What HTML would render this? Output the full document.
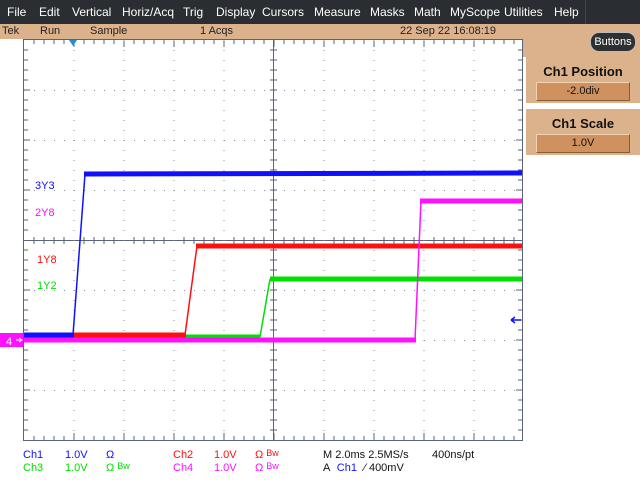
<!DOCTYPE html>
<html><head><style>
body{margin:0;width:640px;height:480px;background:#fff;position:relative;overflow:hidden;font-family:"Liberation Sans",sans-serif;}
#menu{position:absolute;left:0;top:0;width:640px;height:24px;background:#2a2d31;color:#fff;font-size:12px;}
#menu span{position:absolute;top:5px;}
#status{position:absolute;left:0;top:24px;width:640px;height:15px;background:#dcb28c;font-size:11px;color:#222;}
#status span{position:absolute;top:1px;}
#side{position:absolute;left:523px;top:39px;width:117px;height:18px;background:#dcb28c;}
.box{position:absolute;left:526px;width:114px;height:46px;background:#dcb28c;text-align:center;}
.box b{display:block;font-size:13px;margin-top:7px;color:#111;}
.val{position:absolute;left:10px;top:25px;width:92px;height:17px;background:#cf925e;border-top:1px solid #f0d2b4;border-left:1px solid #f0d2b4;border-bottom:1px solid #8a5c34;border-right:1px solid #8a5c34;font-size:11px;line-height:17px;color:#111;}
#btn{position:absolute;left:590px;top:32px;width:44px;height:18px;background:#2e3132;color:#fff;border-radius:9px;border:1px solid #bbb;font-size:11px;line-height:18px;text-align:center;}
.bt{position:absolute;font-size:11px;}
.lab{position:absolute;font-size:11px;}
</style></head><body>
<div id="menu">
<span style="left:7px">File</span><span style="left:39px">Edit</span><span style="left:72px">Vertical</span><span style="left:122px">Horiz/Acq</span><span style="left:183px">Trig</span><span style="left:216px">Display</span><span style="left:262px">Cursors</span><span style="left:314px">Measure</span><span style="left:370px">Masks</span><span style="left:414px">Math</span><span style="left:450px">MyScope</span><span style="left:504px">Utilities</span><span style="left:554px">Help</span>
<div style="position:absolute;left:585px;top:0;width:1px;height:24px;background:#444"></div>
</div>
<div id="status"><span style="left:2px">Tek</span><span style="left:40px">Run</span><span style="left:90px">Sample</span><span style="left:200px">1 Acqs</span><span style="left:400px">22 Sep 22 16:08:19</span></div>
<div id="side"></div>
<div id="btn">Buttons</div>
<div class="box" style="top:57px"><b>Ch1 Position</b><div class="val">-2.0div</div></div>
<div class="box" style="top:109px"><b>Ch1 Scale</b><div class="val">1.0V</div></div>
<svg style="position:absolute;left:0;top:0" width="640" height="480">
<g id="grid" stroke="#5a6478" fill="none" stroke-width="1">
<rect x="23.5" y="39.5" width="499" height="401"/>
<line x1="273.5" y1="40" x2="273.5" y2="440"/>
<line x1="24" y1="240.5" x2="522" y2="240.5"/>
</g>
<g stroke="#5a6478" stroke-width="1">
<path d="M34 40v4M44 40v4M54 40v4M64 40v4M74 40v7M84 40v4M94 40v4M104 40v4M114 40v4M124 40v7M134 40v4M144 40v4M154 40v4M164 40v4M174 40v7M184 40v4M194 40v4M204 40v4M214 40v4M224 40v7M234 40v4M244 40v4M254 40v4M264 40v4M274 40v7M284 40v4M294 40v4M304 40v4M314 40v4M324 40v7M334 40v4M344 40v4M354 40v4M364 40v4M374 40v7M384 40v4M394 40v4M404 40v4M414 40v4M424 40v7M434 40v4M444 40v4M454 40v4M464 40v4M474 40v7M484 40v4M494 40v4M504 40v4M514 40v4"/>
<path d="M34 440v-4M44 440v-4M54 440v-4M64 440v-4M74 440v-7M84 440v-4M94 440v-4M104 440v-4M114 440v-4M124 440v-7M134 440v-4M144 440v-4M154 440v-4M164 440v-4M174 440v-7M184 440v-4M194 440v-4M204 440v-4M214 440v-4M224 440v-7M234 440v-4M244 440v-4M254 440v-4M264 440v-4M274 440v-7M284 440v-4M294 440v-4M304 440v-4M314 440v-4M324 440v-7M334 440v-4M344 440v-4M354 440v-4M364 440v-4M374 440v-7M384 440v-4M394 440v-4M404 440v-4M414 440v-4M424 440v-7M434 440v-4M444 440v-4M454 440v-4M464 440v-4M474 440v-7M484 440v-4M494 440v-4M504 440v-4M514 440v-4"/>
<path d="M34 237v7M44 237v7M54 237v7M64 237v7M84 237v7M94 237v7M104 237v7M114 237v7M134 237v7M144 237v7M154 237v7M164 237v7M184 237v7M194 237v7M204 237v7M214 237v7M234 237v7M244 237v7M254 237v7M264 237v7M284 237v7M294 237v7M304 237v7M314 237v7M334 237v7M344 237v7M354 237v7M364 237v7M384 237v7M394 237v7M404 237v7M414 237v7M434 237v7M444 237v7M454 237v7M464 237v7M484 237v7M494 237v7M504 237v7M514 237v7"/>
<path d="M24 50h4M24 60h4M24 70h4M24 80h4M24 90h6M24 100h4M24 110h4M24 120h4M24 130h4M24 140h6M24 150h4M24 160h4M24 170h4M24 180h4M24 190h6M24 200h4M24 210h4M24 220h4M24 230h4M24 250h4M24 260h4M24 270h4M24 280h4M24 290h6M24 300h4M24 310h4M24 320h4M24 330h4M24 340h6M24 350h4M24 360h4M24 370h4M24 380h4M24 390h6M24 400h4M24 410h4M24 420h4M24 430h4"/>
<path d="M522 50h-4M522 60h-4M522 70h-4M522 80h-4M522 90h-6M522 100h-4M522 110h-4M522 120h-4M522 130h-4M522 140h-6M522 150h-4M522 160h-4M522 170h-4M522 180h-4M522 190h-6M522 200h-4M522 210h-4M522 220h-4M522 230h-4M522 250h-4M522 260h-4M522 270h-4M522 280h-4M522 290h-6M522 300h-4M522 310h-4M522 320h-4M522 330h-4M522 340h-6M522 350h-4M522 360h-4M522 370h-4M522 380h-4M522 390h-6M522 400h-4M522 410h-4M522 420h-4M522 430h-4"/>
<path d="M270 50h7M270 60h7M270 70h7M270 80h7M270 90h7M270 100h7M270 110h7M270 120h7M270 130h7M270 140h7M270 150h7M270 160h7M270 170h7M270 180h7M270 190h7M270 200h7M270 210h7M270 220h7M270 230h7M270 250h7M270 260h7M270 270h7M270 280h7M270 290h7M270 300h7M270 310h7M270 320h7M270 330h7M270 340h7M270 350h7M270 360h7M270 370h7M270 380h7M270 390h7M270 400h7M270 410h7M270 420h7M270 430h7"/>
</g>
<g stroke="#8890a0" stroke-width="1" stroke-dasharray="1 9">
<path d="M74 40v400M124 40v400M174 40v400M224 40v400M324 40v400M374 40v400M424 40v400M474 40v400"/>
<path d="M24 90.5h498M24 140.5h498M24 190.5h498M24 290.5h498M24 340.5h498M24 390.5h498"/>
</g>
<polygon points="69,40 77,40 73,46" fill="#1e90d8"/>
<g fill="none" stroke-width="5">
<line stroke="#00e000" x1="185" y1="337" x2="260" y2="337"/>
<line stroke="#00e000" x1="270" y1="279" x2="522" y2="279"/>
<line stroke="#1010ff" x1="24" y1="335" x2="74" y2="335"/>
<line stroke="#1010ff" x1="84" y1="174" x2="522" y2="173"/>
<line stroke="#ff1010" x1="74" y1="335" x2="186" y2="335"/>
<line stroke="#ff1010" x1="196" y1="246" x2="522" y2="246"/>
<line stroke="#ff10ff" x1="24" y1="340" x2="416" y2="340"/>
<line stroke="#ff10ff" x1="420" y1="201" x2="522" y2="201"/>
</g>
<g fill="none" stroke-width="1.5">
<line stroke="#00e000" x1="260" y1="337" x2="270" y2="279"/>
<line stroke="#1010ff" x1="73" y1="335" x2="85" y2="174"/>
<line stroke="#ff1010" x1="185" y1="335" x2="197" y2="246"/>
<line stroke="#ff10ff" x1="415" y1="340" x2="421" y2="201"/>
</g>
<path d="M511 320h10M511 320l4-3M511 320l4 3" stroke="#1010ff" stroke-width="1.5"/>
<rect x="0" y="333" width="23" height="14" fill="#ff10ff"/>
<text x="6" y="345" fill="#fff" font-size="11" font-family="Liberation Sans">4</text>
<path d="M16 340h6M19 338l3 2-3 2" stroke="#fff" fill="none"/>
</svg>
<div class="lab" style="left:35px;top:180px;color:#1010ff">3Y3</div>
<div class="lab" style="left:35px;top:207px;color:#ff10ff">2Y8</div>
<div class="lab" style="left:37px;top:254px;color:#ff1010">1Y8</div>
<div class="lab" style="left:37px;top:280px;color:#00e000">1Y2</div>
<div class="bt" style="left:23px;top:449px;color:#1010ff">Ch1</div>
<div class="bt" style="left:65px;top:449px;color:#1010ff">1.0V</div>
<div class="bt" style="left:106px;top:449px;color:#1010ff">Ω</div>
<div class="bt" style="left:173px;top:449px;color:#ff1010">Ch2</div>
<div class="bt" style="left:214px;top:449px;color:#ff1010">1.0V</div>
<div class="bt" style="left:255px;top:449px;color:#ff1010">Ω <span style="font-size:9px;position:relative;top:-2px">Bw</span></div>
<div class="bt" style="left:323px;top:449px;color:#111">M 2.0ms 2.5MS/s</div>
<div class="bt" style="left:432px;top:449px;color:#111">400ns/pt</div>
<div class="bt" style="left:23px;top:462px;color:#00e000">Ch3</div>
<div class="bt" style="left:65px;top:462px;color:#00e000">1.0V</div>
<div class="bt" style="left:106px;top:462px;color:#00e000">Ω <span style="font-size:9px;position:relative;top:-2px">Bw</span></div>
<div class="bt" style="left:173px;top:462px;color:#ff10ff">Ch4</div>
<div class="bt" style="left:214px;top:462px;color:#ff10ff">1.0V</div>
<div class="bt" style="left:255px;top:462px;color:#ff10ff">Ω <span style="font-size:9px;position:relative;top:-2px">Bw</span></div>
<div class="bt" style="left:323px;top:462px;color:#111">A <span style="color:#1010ff;margin-left:4px">Ch1</span> <span style="margin-left:4px">⁄</span> 400mV</div>
</body></html>
